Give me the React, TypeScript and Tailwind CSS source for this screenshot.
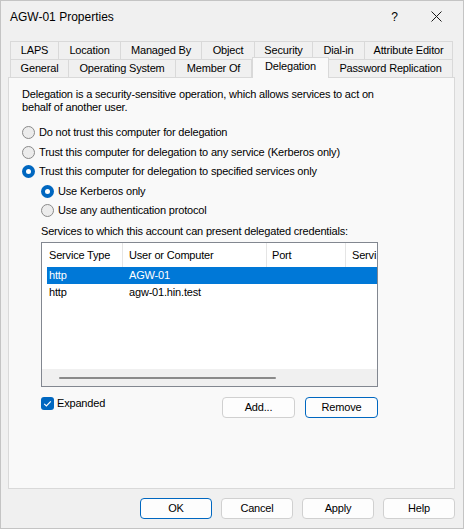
import React from "react";

const font = { fontFamily: '"Liberation Sans", Arial, sans-serif' };

function Radio({ checked, label }: { checked?: boolean; label: string }) {
  return (
    <div className="flex items-center h-[19.5px]">
      {checked ? (
        <div className="w-[13px] h-[13px] rounded-full bg-[#0067c0] flex items-center justify-center shrink-0">
          <div className="w-[5px] h-[5px] rounded-full bg-white" />
        </div>
      ) : (
        <div className="w-[13px] h-[13px] rounded-full border border-[#8a8a8a] bg-[#ececec] shrink-0" />
      )}
      <span className="ml-[4px] leading-[13px]">{label}</span>
    </div>
  );
}

function Btn({ label, def, w }: { label: string; def?: boolean; w: string }) {
  return (
    <div
      className={`${w} h-[21px] rounded-[4px] border bg-[#fdfdfd] flex items-center justify-center leading-[13px] ${
        def ? "border-[#0067c0]" : "border-[#d0d0d0]"
      }`}
    >
      {label}
    </div>
  );
}

export default function App() {
  const row1 = [
    ["LAPS", "w-[49px]"],
    ["Location", "w-[62px]"],
    ["Managed By", "w-[81px]"],
    ["Object", "w-[53px]"],
    ["Security", "w-[58px]"],
    ["Dial-in", "w-[52px]"],
    ["Attribute Editor", "w-[88px]"],
  ];
  const row2 = [
    ["General", "w-[59px]"],
    ["Operating System", "w-[107px]"],
    ["Member Of", "w-[76px]"],
    ["Delegation", "w-[77px]"],
    ["Password Replication", "w-[124px]"],
  ];
  return (
    <div
      style={font}
      className="w-[464px] h-[529px] box-border border border-[#c4c4c4] bg-[#f0f0f0] text-[11px] tracking-[-0.18px] text-black flex flex-col overflow-hidden"
    >
      {/* Title bar */}
      <div className="h-[31px] flex items-center pl-[9px] pr-[21px] shrink-0">
        <span className="text-[12px] tracking-normal">AGW-01 Properties</span>
        <div className="flex-1" />
        <span className="text-[12px] tracking-normal mr-[33px]">?</span>
        <svg width="11" height="11" viewBox="0 0 11 11" className="mb-[1px]">
          <path d="M0.5 0.5 L10.5 10.5 M10.5 0.5 L0.5 10.5" stroke="#1a1a1a" strokeWidth="1" />
        </svg>
      </div>

      {/* Tabs + panel */}
      <div className="pl-[7px] mt-[9px] flex flex-col w-[454px]">
        <div className="flex pl-[2px] h-[18px]">
          {row1.map(([t, w], i) => (
            <div
              key={t}
              className={`${w} h-[18px] border-t border-r border-[#d9d9d9] ${
                i === 0 ? "border-l" : ""
              } flex items-center justify-center leading-[13px] whitespace-nowrap`}
            >
              {t}
            </div>
          ))}
        </div>
        <div className="flex items-end pl-[2px] h-[18px]">
          {row2.map(([t, w], i) => {
            const sel = t === "Delegation";
            return (
              <div
                key={t}
                className={`${w} border-t border-r border-[#d9d9d9] ${i === 0 ? "border-l" : ""} ${
                  sel
                    ? "h-[21px] -mb-[1px] relative z-10 bg-[#f9f9f9] border-l pb-[3px]"
                    : "h-[18px]"
                } flex items-center justify-center leading-[13px] whitespace-nowrap`}
              >
                {t}
              </div>
            );
          })}
        </div>
        <div className="w-[447px] h-[412px] box-border border border-[#d9d9d9] bg-[#f9f9f9] flex flex-col">
          <div className="pl-[13px] pt-[10px] leading-[13px]">
            Delegation is a security-sensitive operation, which allows services to act on
            <br />
            behalf of another user.
          </div>
          <div className="pl-[13px] mt-[9px] flex flex-col">
            <Radio label="Do not trust this computer for delegation" />
            <Radio label="Trust this computer for delegation to any service (Kerberos only)" />
            <Radio checked label="Trust this computer for delegation to specified services only" />
            <div className="pl-[19px] flex flex-col">
              <Radio checked label="Use Kerberos only" />
              <Radio label="Use any authentication protocol" />
            </div>
          </div>
          <div className="pl-[32px] mt-[4px] leading-[13px]">
            Services to which this account can present delegated credentials:
          </div>
          <div className="ml-[32px] mt-[4.5px] w-[337px] h-[145px] box-border border border-[#828790] bg-white flex flex-col overflow-hidden">
            <div className="flex h-[24px] shrink-0 leading-[13px]">
              <div className="w-[81px] border-r border-[#e5e5e5] pl-[7px] flex items-center">Service Type</div>
              <div className="w-[144px] border-r border-[#e5e5e5] pl-[6px] flex items-center">User or Computer</div>
              <div className="w-[79px] border-r border-[#e5e5e5] pl-[5px] flex items-center">Port</div>
              <div className="flex-1 pl-[6px] flex items-center whitespace-nowrap">Servi</div>
            </div>
            <div className="ml-[5px] h-[17px] bg-[#0078d7] text-white flex items-center leading-[13px]">
              <div className="w-[76px] pl-[2px]">http</div>
              <div className="pl-[6px]">AGW-01</div>
            </div>
            <div className="ml-[5px] h-[17px] flex items-center leading-[13px]">
              <div className="w-[76px] pl-[2px]">http</div>
              <div className="pl-[6px]">agw-01.hin.test</div>
            </div>
            <div className="flex-1" />
            <div className="h-[17px] bg-[#f0f0f0] shrink-0 flex items-center pl-[17px]">
              <div className="w-[217px] h-[2px] rounded-full bg-[#8a8a8a]" />
            </div>
          </div>
          <div className="ml-[32px] mt-[10px] w-[337px] flex items-start">
            <div className="flex items-center h-[13px]">
              <div className="w-[13px] h-[13px] rounded-[3px] bg-[#0067c0] flex items-center justify-center">
                <svg width="13" height="13" viewBox="0 0 13 13">
                  <path d="M3.2 6.8 L5.4 9 L9.8 4.4" fill="none" stroke="white" strokeWidth="1.2" />
                </svg>
              </div>
              <span className="ml-[3px] leading-[13px]">Expanded</span>
            </div>
            <div className="flex-1" />
            <Btn label="Add..." w="w-[73px]" />
            <div className="w-[10px]" />
            <Btn label="Remove" def w="w-[73px]" />
          </div>
        </div>
      </div>

      {/* Bottom buttons */}
      <div className="mt-[9px] flex justify-end gap-[9px] w-[454px]">
        <Btn label="OK" def w="w-[72px]" />
        <Btn label="Cancel" w="w-[72px]" />
        <Btn label="Apply" w="w-[72px]" />
        <Btn label="Help" w="w-[72px]" />
      </div>
    </div>
  );
}
